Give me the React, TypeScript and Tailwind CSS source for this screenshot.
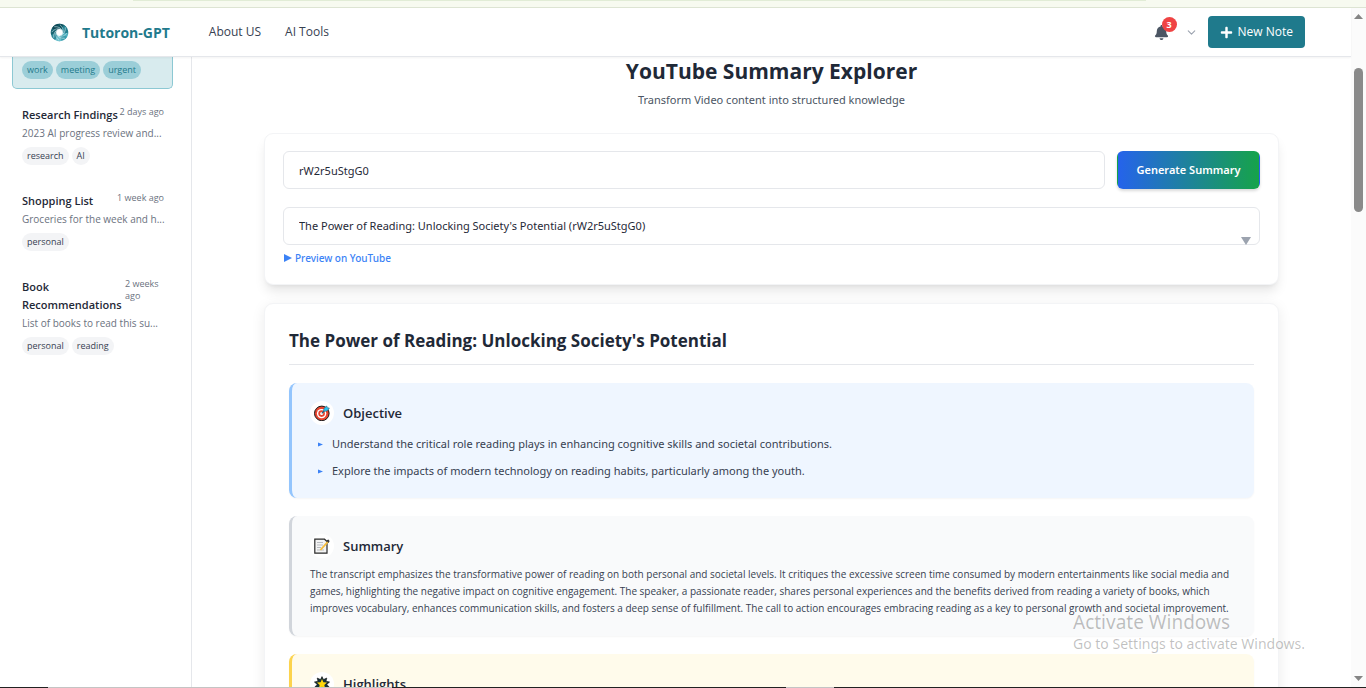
import React from "react";
import { FaBell, FaPlus } from "react-icons/fa";
import { FiChevronDown } from "react-icons/fi";

type Note = { title: string; time: string; preview: string; tags: string[] };

const notes: Note[] = [
  { title: "Research Findings", time: "2 days ago", preview: "2023 AI progress review and...", tags: ["research", "AI"] },
  { title: "Shopping List", time: "1 week ago", preview: "Groceries for the week and h...", tags: ["personal"] },
  { title: "Book\nRecommendations", time: "2 weeks\nago", preview: "List of books to read this su...", tags: ["personal", "reading"] },
];

const objectives = [
  "Understand the critical role reading plays in enhancing cognitive skills and societal contributions.",
  "Explore the impacts of modern technology on reading habits, particularly among the youth.",
];

const blades = ["#4fb0bf", "#3a9dad", "#6cc0cd", "#2c8797", "#176472", "#0d4856", "#0f5360", "#238090"];

function Logo() {
  return (
    <svg viewBox="-10 -10 20 20" className="size-[19px]" aria-hidden="true">
      {blades.map((color, i) => (
        <path
          key={color}
          d="M3.6 -0.6 L8.8 -2.4 A9.1 9.1 0 0 1 5.6 7.2 L2.4 2.7 A3.6 3.6 0 0 0 3.6 -0.6Z"
          fill={color}
          transform={`rotate(${i * 45})`}
        />
      ))}
      {blades.map((color, i) => (
        <path
          key={color}
          d="M3.4 1.2 C4.6 -2.4 3.4 -5.8 0.4 -8.2"
          fill="none"
          stroke="#d9eff2"
          strokeWidth="0.6"
          transform={`rotate(${i * 45})`}
        />
      ))}
    </svg>
  );
}

function TargetIcon() {
  return (
    <svg viewBox="0 0 16 16" className="size-4" aria-hidden="true">
      <circle cx="7.8" cy="8.4" r="7.3" fill="#e8442e" stroke="#1b1b1b" strokeWidth="1" />
      <circle cx="7.6" cy="8.6" r="4.7" fill="#fff" />
      <circle cx="7.6" cy="8.6" r="3.3" fill="#e8442e" />
      <circle cx="7.6" cy="8.6" r="1.5" fill="#fff" />
      <path d="M7.8 8.4 11 5" stroke="#15678a" strokeWidth="1.2" />
      <path d="M9.6 6.3 10 3.2 12.8 1 13.3 2.7 15.4 3.1 13.2 6 Z" fill="#2fc3ee" stroke="#17506b" strokeWidth="0.5" />
    </svg>
  );
}

function MemoIcon() {
  return (
    <svg viewBox="0 0 16 16" className="size-4" aria-hidden="true">
      <path d="M0.8 1.2H10.5L13 3.5V15.2H0.8Z" fill="#f4f4f4" stroke="#2b2b2b" strokeWidth="1.2" />
      <path d="M3 4.5H9M3 7H9M3 9.5H7M3 12H10" stroke="#b9bcc0" strokeWidth="1" />
      <path d="M6.4 12 14 3.6" stroke="#f6bd3b" strokeWidth="1.8" />
      <path d="M12.2 2.6 14.4 1.6 15.6 3 14.6 4.9Z" fill="#3b3b3b" />
    </svg>
  );
}

function StarIcon() {
  return (
    <svg viewBox="0 0 16 16" className="size-4" aria-hidden="true">
      <path
        d="M8 0.6 9.5 3.6 12.8 2 12 5.2 15.6 6 12.8 8.4 15.2 11.2 11.7 11.6 11.6 15 8 13 4.4 15 4.3 11.6 0.8 11.2 3.2 8.4 0.4 6 4 5.2 3.2 2 6.5 3.6Z"
        fill="#16323a"
        stroke="#111"
        strokeWidth="0.6"
      />
      <path d="M8 3 9.4 6.3 13 6.6 10.3 9 11.2 12.6 8 10.7 4.8 12.6 5.7 9 3 6.6 6.6 6.3Z" fill="#ffd60a" />
    </svg>
  );
}

function Section({
  title,
  icon,
  className,
  children,
}: {
  title: string;
  icon: React.ReactNode;
  className: string;
  children?: React.ReactNode;
}) {
  return (
    <section className={`mt-[18px] rounded-lg border-l-[3px] p-[18px] shadow-[0_1px_2px_rgba(0,0,0,0.04)] ${className}`}>
      <div className="flex items-center gap-[9px]">
        <span className="flex size-6 items-center justify-center rounded-full bg-white">{icon}</span>
        <h3 className="text-[13px] leading-6 font-semibold text-[#1f2937]">{title}</h3>
      </div>
      {children}
    </section>
  );
}

function Tag({ children, active }: { children: string; active?: boolean }) {
  return (
    <span
      className={`rounded-full px-[5px] text-[9px] leading-[18px] ${
        active ? "bg-[#9bced8] text-[#1f7a8c]" : "bg-[#f3f4f6] text-[#374151]"
      }`}
    >
      {children}
    </span>
  );
}

export default function App() {
  return (
    <div className="relative flex h-screen flex-col overflow-hidden bg-white font-['Open_Sans','Noto_Sans',sans-serif] text-[#1f2937]">
      <div className="h-2 shrink-0 border-b border-[#dde4d3] bg-[#f7faf0] pr-[220px] pl-[133px]">
        <div className="h-px bg-[#e1ecd6]" />
      </div>

      <div className="flex min-h-0 flex-1">
        <div className="flex min-w-0 flex-1 flex-col">
          <header className="z-10 flex h-[49px] shrink-0 items-center justify-between border-b border-[#e5e7eb] bg-white pr-[46px] pl-[50px] shadow-[0_1px_2px_rgba(0,0,0,0.05)]">
            <div className="flex items-center">
              <a href="#" className="flex items-center gap-[13px] text-[14px] font-bold text-[#1f7a8c]">
                <Logo />
                Tutoron-GPT
              </a>
              <nav className="ml-[39px] flex gap-6 text-[12px] font-medium text-[#374151]">
                <a href="#about">About US</a>
                <a href="#tools">AI Tools</a>
              </nav>
            </div>
            <div className="flex items-center">
              <button type="button" aria-label="Notifications" className="relative text-[15px] text-[#4b5563]">
                <FaBell />
                <span className="absolute -top-2 left-2 flex size-[15px] items-center justify-center rounded-full bg-[#ef4444] text-[9px] leading-none font-bold text-white">
                  3
                </span>
              </button>
              <button type="button" aria-label="Account menu" className="ml-4 text-[13px] text-[#9ca3af]">
                <FiChevronDown />
              </button>
              <button
                type="button"
                className="ml-[10px] flex h-8 items-center gap-[5px] rounded bg-[#1f7a8c] px-3 text-[12px] font-medium text-white"
              >
                <FaPlus className="size-[13px]" />
                New Note
              </button>
            </div>
          </header>

          <div className="flex min-h-0 flex-1 overflow-hidden">
            <aside className="flex w-48 shrink-0 flex-col gap-[7px] border-r border-[#e5e7eb] pr-[18px] pl-3">
              <div className="flex gap-[3px] rounded-b-[5px] border border-t-0 border-[#8cc8d3] bg-[#d8ebee] px-[9px] pt-1 pb-[9px]">
                <Tag active>work</Tag>
                <Tag active>meeting</Tag>
                <Tag active>urgent</Tag>
              </div>
              {notes.map((note) => (
                <article key={note.title} className="p-[10px] pr-[9px]">
                  <div className="flex items-start justify-between">
                    <h4 className="text-[11px] leading-[18px] font-semibold whitespace-pre">{note.title}</h4>
                    <time className="min-w-[39px] text-[9px] leading-3 whitespace-pre text-[#6b7280]">{note.time}</time>
                  </div>
                  <p className="text-[10px] leading-[18px] whitespace-nowrap text-[#6b7280]">{note.preview}</p>
                  <div className="mt-[5px] flex gap-[3px]">
                    {note.tags.map((tag) => (
                      <Tag key={tag}>{tag}</Tag>
                    ))}
                  </div>
                </article>
              ))}
            </aside>

            <main className="min-w-0 flex-1 px-[72px]">
              <div className="text-center">
                <h1 className="text-[21px] leading-7 font-bold">YouTube Summary Explorer</h1>
                <p className="mt-[6px] font-['Noto_Sans',sans-serif] text-[11px] leading-[18px] text-[#4b5563]">
                  Transform Video content into structured knowledge
                </p>
              </div>

              <form
                className="mt-6 rounded-[9px] border border-[#f3f4f6] bg-white px-[18px] pt-[17px] pb-[17px] font-['Noto_Sans',sans-serif] shadow-[0_8px_12px_-2px_rgba(0,0,0,0.1),0_3px_5px_-3px_rgba(0,0,0,0.08)]"
                onSubmit={(e) => e.preventDefault()}
              >
                <div className="flex gap-3">
                  <input
                    type="text"
                    aria-label="YouTube video ID"
                    defaultValue="rW2r5uStgG0"
                    className="h-[38px] min-w-0 flex-1 rounded-md border border-[#e5e7eb] px-[15px] text-[11px]"
                  />
                  <button
                    type="submit"
                    className="h-[38px] w-[143px] rounded-md border border-transparent bg-linear-to-r/srgb from-[#2563eb] to-[#16a34a] text-[11px] font-semibold text-white shadow-[0_2px_3px_rgba(0,0,0,0.15)]"
                  >
                    Generate Summary
                  </button>
                </div>
                <div className="relative mt-[18px]">
                  <select
                    aria-label="Saved summary"
                    className="block h-[38px] w-full appearance-none rounded-md border border-[#e5e7eb] bg-white px-[15px] text-[11px]"
                  >
                    <option>The Power of Reading: Unlocking Society's Potential (rW2r5uStgG0)</option>
                  </select>
                  <svg viewBox="0 0 10 8" className="pointer-events-none absolute right-[9px] bottom-0 h-2 w-[10px]" aria-hidden="true">
                    <path d="M0 0H10L5 8Z" fill="#9ca3af" />
                  </svg>
                </div>
                <a href="#preview" className="mt-1 flex items-center gap-[3px] text-[10px] leading-[18px] font-medium text-[#3b82f6]">
                  <svg viewBox="0 0 8 8" className="ml-px size-2" aria-hidden="true">
                    <path d="M0 0L8 4L0 8Z" fill="currentColor" />
                  </svg>
                  Preview on YouTube
                </a>
              </form>

              <div className="mt-[18px] rounded-[9px] border border-[#f3f4f6] bg-white px-6 pt-6 pb-6 shadow-[0_3px_14px_rgba(0,0,0,0.08)]">
                <h2 className="border-b border-[#e5e7eb] pb-[11px] text-[17px] leading-[25px] font-bold">
                  The Power of Reading: Unlocking Society's Potential
                </h2>

                <Section title="Objective" icon={<TargetIcon />} className="border-[#93c5fd] bg-[#eff6ff]">
                  <ul className="mt-[10px] flex flex-col gap-[9px] pl-2">
                    {objectives.map((text) => (
                      <li
                        key={text}
                        className="flex items-center gap-[9px] font-['Noto_Sans',sans-serif] text-[11px] leading-[18px] text-[#374151]"
                      >
                        <svg viewBox="0 0 5 5" className="size-[5px]" aria-hidden="true">
                          <path d="M0 0.4L5 2.5L0 4.6Z" fill="#3b82f6" />
                        </svg>
                        {text}
                      </li>
                    ))}
                  </ul>
                </Section>

                <Section title="Summary" icon={<MemoIcon />} className="border-[#d1d5db] bg-[#f9fafb]">
                  <p className="mt-2 mb-px text-[10px] leading-[17px] text-[#374151]">
                    The transcript emphasizes the transformative power of reading on both personal and societal levels. It
                    critiques the excessive screen time consumed by modern entertainments like social media and games,
                    highlighting the negative impact on cognitive engagement. The speaker, a passionate reader, shares
                    personal experiences and the benefits derived from reading a variety of books, which improves
                    vocabulary, enhances communication skills, and fosters a deep sense of fulfillment. The call to action
                    encourages embracing reading as a key to personal growth and societal improvement.
                  </p>
                </Section>

                <Section title="Highlights" icon={<StarIcon />} className="border-[#fcd34d] bg-[#fffbeb]" />
              </div>
            </main>
          </div>
        </div>

        <div className="flex w-[15px] shrink-0 flex-col items-center bg-[#fbfbfb] py-[6px]" aria-hidden="true">
          <svg viewBox="0 0 9 5" className="h-[5px] w-[9px]">
            <path d="M0 5L4.5 0L9 5Z" fill="#858585" />
          </svg>
          <div className="mt-[49px] h-36 w-[9px] rounded-full bg-[#8a8a8a]" />
          <svg viewBox="0 0 9 5" className="mt-auto h-[5px] w-[9px]">
            <path d="M0 0L4.5 5L9 0Z" fill="#858585" />
          </svg>
        </div>
      </div>

      <div className="flex h-px shrink-0 bg-[#222]" aria-hidden="true">
        <div className="ml-12 w-[344px] bg-[#c4c4c4]" />
        <div className="ml-[394px] w-12 bg-[#c4c4c4]" />
      </div>

      <div className="pointer-events-none absolute right-[57px] bottom-[34px] z-20 w-[236px] font-['Noto_Sans',sans-serif] whitespace-nowrap text-black/25">
        <p className="text-[19px] leading-6">Activate Windows</p>
        <p className="text-[14px] leading-5">Go to Settings to activate Windows.</p>
      </div>
    </div>
  );
}
